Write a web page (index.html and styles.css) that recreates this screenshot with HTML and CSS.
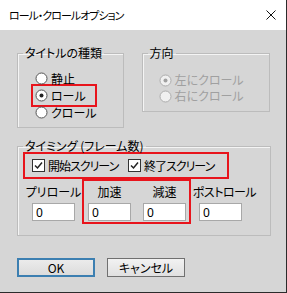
FILE: index.html
```html
<!DOCTYPE html>
<html>
<head>
  <title>ロール・クロールオプション</title>
  <link rel="stylesheet" href="styles.css">
</head>
<body>
  <div class="window">
    <div class="titlebar">
      <span class="title">ロール・クロールオプション</span>
      <svg class="close" width="10" height="10" viewBox="0 0 10 10">
        <path d="M0.5 0.5 L9.5 9.5 M9.5 0.5 L0.5 9.5" stroke="#111" stroke-width="1" fill="none"/>
      </svg>
    </div>

    <div class="dialog">
      <div class="top-row">
        <fieldset class="group kind">
          <legend>タイトルの種類</legend>
          <div class="group-body">
            <div class="opt">
              <svg class="radio" width="13" height="13" viewBox="0 0 13 13"><circle cx="6.5" cy="6.5" r="5.5" fill="#fff" stroke="#555"/></svg>
              静止
            </div>
            <div class="opt mark mark-roll">
              <svg class="radio" width="13" height="13" viewBox="0 0 13 13"><circle cx="6.5" cy="6.5" r="5.5" fill="#fff" stroke="#555"/><circle cx="6.5" cy="6.5" r="2" fill="#222"/></svg>
              ロール
            </div>
            <div class="opt">
              <svg class="radio" width="13" height="13" viewBox="0 0 13 13"><circle cx="6.5" cy="6.5" r="5.5" fill="#fff" stroke="#555"/></svg>
              クロール
            </div>
          </div>
        </fieldset>

        <fieldset class="group dir">
          <legend>方向</legend>
          <div class="group-body">
            <div class="opt disabled">
              <svg class="radio" width="13" height="13" viewBox="0 0 13 13"><circle cx="6.5" cy="6.5" r="5.5" fill="#f0f0f0" stroke="#adadad"/><circle cx="6.5" cy="6.5" r="2" fill="#a0a0a0"/></svg>
              左にクロール
            </div>
            <div class="opt disabled">
              <svg class="radio" width="13" height="13" viewBox="0 0 13 13"><circle cx="6.5" cy="6.5" r="5.5" fill="#f0f0f0" stroke="#adadad"/></svg>
              右にクロール
            </div>
          </div>
        </fieldset>
      </div>

      <fieldset class="group timing">
        <legend>タイミング (フレーム数)</legend>
        <div class="checks mark">
          <div class="check start">
            <svg width="13" height="13" viewBox="0 0 13 13"><rect x="0.5" y="0.5" width="12" height="12" fill="#fff" stroke="#333"/><path d="M3 6.5 L5.5 9 L10 3.5" stroke="#222" stroke-width="1.5" fill="none"/></svg>
            開始スクリーン
          </div>
          <div class="check">
            <svg width="13" height="13" viewBox="0 0 13 13"><rect x="0.5" y="0.5" width="12" height="12" fill="#fff" stroke="#333"/><path d="M3 6.5 L5.5 9 L10 3.5" stroke="#222" stroke-width="1.5" fill="none"/></svg>
            終了スクリーン
          </div>
        </div>

        <div class="frames">
          <div class="field pre">
            <label>プリロール</label>
            <input type="text" value="0">
          </div>
          <div class="speed mark">
            <div class="field">
              <label>加速</label>
              <input type="text" value="0">
            </div>
            <div class="field">
              <label>減速</label>
              <input type="text" value="0">
            </div>
          </div>
          <div class="field post">
            <label>ポストロール</label>
            <input type="text" value="0">
          </div>
        </div>
      </fieldset>

      <div class="buttons">
        <button class="btn default">OK</button>
        <button class="btn">キャンセル</button>
      </div>
    </div>
  </div>
</body>
</html>
```

FILE: styles.css
```css
body {
  margin: 0;
  padding: 0;
  background: #2a2a2a;
  font-family: "Noto Sans CJK JP", "Noto Sans", sans-serif;
  font-size: 12px;
  font-feature-settings: "palt";
  color: #000;
}
.window {
  width: 287px;
  height: 293px;
  box-sizing: border-box;
  border-right: 1px solid #2b2b2b;
  border-bottom: 1px solid #2b2b2b;
  background: #d6d6d6;
  display: flex;
  flex-direction: column;
}
.titlebar {
  height: 30px;
  background: #fff;
  display: flex;
  align-items: center;
  padding: 0 10px 0 9px;
  flex-shrink: 0;
}
.title {
  flex: 1;
  font-size: 11px;
  letter-spacing: -1px;
  line-height: 14px;
  white-space: nowrap;
}
.close {
  display: block;
}
.dialog {
  padding: 16px 16px 0 17px;
}
.top-row {
  display: flex;
  align-items: flex-start;
  gap: 18px;
}
.group {
  margin: 0;
  padding: 0;
  min-width: 0;
  border: 1px solid #bcbcbc;
  box-shadow: inset 1px 1px 0 #f4f4f4;
}
.group legend {
  margin-left: 5px;
  padding: 0 2px;
  line-height: 14px;
  height: 14px;
  white-space: nowrap;
}
.kind {
  width: 107px;
  box-sizing: border-box;
}
.kind .group-body {
  padding: 10px 0 6px 17px;
}
.dir {
  width: 129px;
  box-sizing: border-box;
}
.dir .group-body {
  padding: 12px 0 7px 16px;
}
.opt {
  display: flex;
  align-items: center;
  gap: 3px;
  height: 17px;
  line-height: 17px;
  white-space: nowrap;
}
.dir .opt {
  height: 16px;
  line-height: 16px;
}
.radio {
  display: block;
  flex-shrink: 0;
}
.disabled {
  color: #a0a0a0;
}
.mark {
  border: 2px solid #e8141c;
}
.mark-roll {
  width: 66px;
  height: 23px;
  box-sizing: border-box;
  margin: -3px 0 -3px -4px;
  padding-left: 2px;
}
.timing {
  width: 254px;
  box-sizing: border-box;
  margin-top: 11px;
  padding-bottom: 11px;
}
.checks {
  display: flex;
  align-items: center;
  width: 206px;
  height: 27px;
  box-sizing: border-box;
  margin: -1px 0 0 5px;
  padding-left: 7px;
}
.check {
  display: flex;
  align-items: center;
  gap: 3px;
  line-height: 14px;
  white-space: nowrap;
  letter-spacing: -1px;
  flex-shrink: 0;
}
.check svg {
  display: block;
  flex-shrink: 0;
}
.check.start {
  width: 96px;
}
.frames {
  display: flex;
  align-items: flex-start;
}
.field {
  width: 43px;
  display: flex;
  flex-direction: column;
  align-items: center;
  gap: 4px;
}
.field label {
  line-height: 14px;
  white-space: nowrap;
}
.field input {
  width: 43px;
  height: 18px;
  box-sizing: border-box;
  border: 1px solid #a8a8a8;
  background: #fff;
  padding: 0 3px;
  margin: 0;
  font-family: "Noto Sans", sans-serif;
  font-size: 12px;
  color: #000;
  outline: none;
}
.pre {
  margin: 6px 0 0 14px;
}
.speed {
  display: flex;
  gap: 12px;
  margin-left: 7px;
  padding: 4px 3px 1px 4px;
}
.post {
  margin: 6px 0 0 8px;
}
.post label {
  margin-left: 8px;
  letter-spacing: -0.5px;
}
.buttons {
  display: flex;
  gap: 12px;
  margin-top: 22px;
}
.btn {
  width: 78px;
  height: 19px;
  box-sizing: border-box;
  margin: 0;
  padding: 0;
  border: 1px solid #707070;
  background: linear-gradient(#f2f2f2, #e0e0e0);
  font-family: "Noto Sans CJK JP", "Noto Sans", sans-serif;
  font-size: 12px;
  font-feature-settings: "palt";
  line-height: 16px;
  color: #000;
}
.btn.default {
  border: 2px solid #3c7fb1;
  background: linear-gradient(#ebebeb, #dcdcdc);
}
```
